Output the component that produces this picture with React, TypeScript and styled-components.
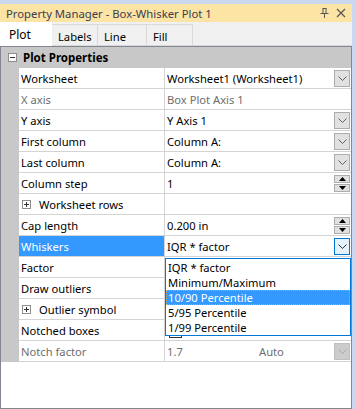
import React from "react";
import styled, { createGlobalStyle, css } from "styled-components";

const GlobalStyle = createGlobalStyle`
  html, body { margin: 0; padding: 0; }
  body {
    background: #c9d8ec;
    font-family: "Noto Sans", "Open Sans", sans-serif;
    font-size: 11.2px;
    color: #000;
  }
`;

const Window = styled.div`
  width: 352px;
  height: 405px;
  margin-top: 4px;
  background: #f0f0f0;
  display: flex;
  flex-direction: column;
`;

const TitleBar = styled.div`
  height: 18px;
  background: #fbe4a4;
  display: flex;
  align-items: center;
  padding: 0 6px 0 6px;
  color: #3c3c50;
  font-size: 11.3px;
`;

const Title = styled.div`
  flex: 1;
  white-space: nowrap;
`;

const TitleIcons = styled.div`
  display: flex;
  gap: 7px;
  align-items: center;
`;

const TabStrip = styled.div`
  height: 24px;
  display: flex;
  align-items: flex-end;
  background: #f0f0f0;
  border-bottom: 1px solid #d9d9d9;
  box-sizing: border-box;
`;

const Tab = styled.div<{ $active?: boolean; $w: number }>`
  width: ${(p) => p.$w}px;
  flex: none;
  box-sizing: border-box;
  display: flex;
  align-items: center;
  ${(p) =>
    p.$active
      ? css`
          height: 24px;
          background: #fff;
          padding-left: 9px;
          margin-bottom: -1px;
          font-size: 12px;
        `
      : css`
          height: 21px;
          padding-left: 6px;
          background: #f0f0f0;
          border: 1px solid #d9d9d9;
          border-bottom: none;
          border-left: none;
          padding-top: 2px;
        `}
`;

const Panel = styled.div`
  position: relative;
  flex: 1;
  border: 1px solid #828790;
  background: #fff;
  display: flex;
  flex-direction: column;
`;

const Header = styled.div`
  height: 21px;
  background: #c8c8c8;
  display: flex;
  align-items: center;
  font-weight: bold;
  font-size: 11.5px;
  gap: 6px;
  padding-left: 6px;
`;

const Row = styled.div`
  display: grid;
  grid-template-columns: 18px 146px 1fr;
  height: 21px;
`;

const Gutter = styled.div`
  background: #c8c8c8;
`;

const LabelCell = styled.div<{ $selected?: boolean; $disabled?: boolean }>`
  border-bottom: 1px solid #d4d4d4;
  border-right: 1px solid #d4d4d4;
  display: flex;
  align-items: center;
  padding-left: 2px;
  gap: 8px;
  white-space: nowrap;
  color: ${(p) => (p.$selected ? "#fff" : p.$disabled ? "#6d6d6d" : "#000")};
  background: ${(p) => (p.$selected ? "#3399ff" : "#fff")};
`;

const ValueCell = styled.div<{ $disabled?: boolean }>`
  border-bottom: 1px solid #d4d4d4;
  display: flex;
  align-items: center;
  padding-left: 2px;
  padding-right: 1px;
  white-space: nowrap;
  color: ${(p) => (p.$disabled ? "#6d6d6d" : "#000")};
`;

const ValueText = styled.span<{ $w?: number }>`
  flex: ${(p) => (p.$w ? "none" : "1")};
  width: ${(p) => (p.$w ? `${p.$w}px` : "auto")};
`;

const DropBtn = styled.div<{ $state?: "normal" | "focus" | "disabled" }>`
  width: 16px;
  height: 17px;
  box-sizing: border-box;
  display: flex;
  align-items: center;
  justify-content: center;
  ${(p) =>
    p.$state === "focus"
      ? css`
          background: #e5f1fb;
          border: 1px solid #0078d7;
        `
      : p.$state === "disabled"
      ? css`
          background: #cccccc;
          border: 1px solid #bfbfbf;
        `
      : css`
          background: #e1e1e1;
          border: 1px solid #adadad;
        `}
`;

const Spin = styled.div`
  width: 16px;
  height: 17px;
  display: flex;
  flex-direction: column;
  box-sizing: border-box;
  gap: 1px;
`;

const SpinHalf = styled.div`
  flex: 1;
  background: #e1e1e1;
  border: 1px solid #adadad;
  display: flex;
  align-items: center;
  justify-content: center;
`;

const PlusBox = styled.div`
  width: 9px;
  height: 9px;
  flex: none;
  box-sizing: border-box;
  border: 1px solid #8e8e8e;
  background: #fff;
  position: relative;
  margin-left: 1px;
  &::before {
    content: "";
    position: absolute;
    left: 1px;
    right: 1px;
    top: 3px;
    height: 1px;
    background: #333;
  }
`;

const PlusBoxPlus = styled(PlusBox)`
  &::after {
    content: "";
    position: absolute;
    top: 1px;
    bottom: 1px;
    left: 3px;
    width: 1px;
    background: #333;
  }
`;

const Check = styled.div`
  width: 13px;
  height: 13px;
  box-sizing: border-box;
  border: 1px solid #333;
  background: #fff;
  margin-left: 2px;
  margin-top: 2px;
`;

const EmptyArea = styled.div`
  flex: 1;
  background: #fff;
`;

const DropList = styled.div`
  position: absolute;
  left: 164px;
  top: 211px;
  width: 186px;
  box-sizing: border-box;
  border: 1px solid #0078d7;
  background: #fff;
  padding: 1px 0 0 0;
`;

const DropItem = styled.div<{ $selected?: boolean }>`
  height: 15px;
  line-height: 15px;
  padding-left: 2px;
  white-space: nowrap;
  box-sizing: border-box;
  ${(p) =>
    p.$selected &&
    css`
      background: #3399ff;
      color: #fff;
      outline: 1px dotted #e8a050;
      outline-offset: -1px;
    `}
`;

const Chevron = ({ color = "#606060" }: { color?: string }) => (
  <svg width="9" height="5" viewBox="0 0 9 5">
    <path d="M0.5 0.5 L4.5 4.5 L8.5 0.5" fill="none" stroke={color} strokeWidth="1" />
  </svg>
);

const Tri = ({ up }: { up?: boolean }) => (
  <svg width="7" height="4" viewBox="0 0 7 4">
    <path d={up ? "M0 4 L3.5 0 L7 4 Z" : "M0 0 L3.5 4 L7 0 Z"} fill="#000" />
  </svg>
);

type RowDef = {
  label: string;
  value?: string;
  control?: "drop" | "spin" | "focus" | "disabledDrop" | "check";
  disabled?: boolean;
  selected?: boolean;
  expand?: boolean;
  extra?: string;
};

const rows: RowDef[] = [
  { label: "Worksheet", value: "Worksheet1 (Worksheet1)", control: "drop" },
  { label: "X axis", value: "Box Plot Axis 1", disabled: true },
  { label: "Y axis", value: "Y Axis 1", control: "drop" },
  { label: "First column", value: "Column A:", control: "drop" },
  { label: "Last column", value: "Column A:", control: "drop" },
  { label: "Column step", value: "1", control: "spin" },
  { label: "Worksheet rows", expand: true },
  { label: "Cap length", value: "0.200 in", control: "spin" },
  { label: "Whiskers", value: "IQR * factor", control: "focus", selected: true },
  { label: "Factor" },
  { label: "Draw outliers" },
  { label: "Outlier symbol", expand: true },
  { label: "Notched boxes", control: "check" },
  { label: "Notch factor", value: "1.7", extra: "Auto", control: "disabledDrop", disabled: true },
];

const options = ["IQR * factor", "Minimum/Maximum", "10/90 Percentile", "5/95 Percentile", "1/99 Percentile"];

export default function App() {
  return (
    <>
      <GlobalStyle />
      <Window>
        <TitleBar>
          <Title>Property Manager - Box-Whisker Plot 1</Title>
          <TitleIcons>
            <svg width="9" height="10" viewBox="0 0 9 10">
              <path d="M2.5 0.5 H6.5 M3 0.5 V5.5 M6 0.5 V5.5 M0.5 5.5 H8.5 M4.5 5.5 V10" stroke="#555" strokeWidth="1" fill="none" />
            </svg>
            <svg width="10" height="10" viewBox="0 0 10 10">
              <path d="M1 1 L9 9 M9 1 L1 9" stroke="#555" strokeWidth="1.2" fill="none" />
            </svg>
          </TitleIcons>
        </TitleBar>
        <TabStrip>
          <Tab $active $w={52}>Plot</Tab>
          <Tab $w={46}>Labels</Tab>
          <Tab $w={49}>Line</Tab>
          <Tab $w={46}>Fill</Tab>
        </TabStrip>
        <Panel>
          <Header>
            <PlusBox />
            <span>Plot Properties</span>
          </Header>
          {rows.map((r) => (
            <Row key={r.label}>
              <Gutter />
              <LabelCell $selected={r.selected} $disabled={r.disabled}>
                {r.expand && <PlusBoxPlus />}
                {r.label}
              </LabelCell>
              <ValueCell $disabled={r.disabled}>
                {r.control === "check" ? (
                  <Check />
                ) : (
                  <>
                    <ValueText $w={r.extra ? 92 : undefined}>{r.value}</ValueText>
                    {r.extra && <ValueText>{r.extra}</ValueText>}
                  </>
                )}
                {r.control === "drop" && (
                  <DropBtn>
                    <Chevron />
                  </DropBtn>
                )}
                {r.control === "focus" && (
                  <DropBtn $state="focus">
                    <Chevron color="#303030" />
                  </DropBtn>
                )}
                {r.control === "disabledDrop" && (
                  <DropBtn $state="disabled">
                    <Chevron color="#a8a8a8" />
                  </DropBtn>
                )}
                {r.control === "spin" && (
                  <Spin>
                    <SpinHalf>
                      <Tri up />
                    </SpinHalf>
                    <SpinHalf>
                      <Tri />
                    </SpinHalf>
                  </Spin>
                )}
              </ValueCell>
            </Row>
          ))}
          <EmptyArea />
          <DropList>
            {options.map((o) => (
              <DropItem key={o} $selected={o === "10/90 Percentile"}>
                {o}
              </DropItem>
            ))}
          </DropList>
        </Panel>
      </Window>
    </>
  );
}
